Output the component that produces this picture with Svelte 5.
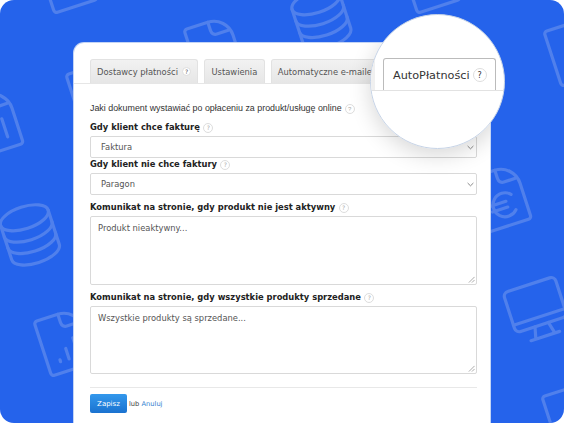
<script>
  const tabs = [
    { label: "Dostawcy płatności", help: true },
    { label: "Ustawienia" },
    { label: "Automatyczne e-maile" }
  ];
</script>

{#snippet help(cls = "")}
  <span class="help {cls}">?</span>
{/snippet}

{#snippet doc(x, y, body)}
  <g transform="translate({x} {y}) rotate(-18)">
    <path d="M3 0h22a20 20 0 0 1 20 20v34a3 3 0 0 1-3 3H3a3 3 0 0 1-3-3V3a3 3 0 0 1 3-3z" />
    <path d="M25 0v9a5 5 0 0 0 5 5h12" />
    {@render body?.()}
  </g>
{/snippet}

{#snippet coins(x, y)}
  <g transform="translate({x} {y}) rotate(-18)">
    <ellipse cx="25" cy="10" rx="25" ry="11" />
    <path d="M0 10v12c0 6 11 11 25 11s25-5 25-11V10" />
    <path d="M0 22v12c0 6 11 11 25 11s25-5 25-11V22" />
    <path d="M0 34v12c0 6 11 11 25 11s25-5 25-11V34" />
  </g>
{/snippet}

{#snippet bars()}
  <path d="M13 44v2M22 35v11M32 27v19" />
{/snippet}

{#snippet euro()}
  <path d="M33 28a12 12 0 1 0 0 16M10 33h16M10 39h16" />
{/snippet}

<main class="stage">
  <svg class="pattern" viewBox="0 0 564 423" aria-hidden="true">
    {@render doc(37, -41)}
    {@render doc(184, 30)}
    {@render coins(289, 0)}
    {@render doc(400, -41)}
    {@render doc(544, 32)}
    {@render doc(-37, 103, bars)}
    {@render doc(66, 75)}
    {@render coins(-2.5, 216)}
    {@render doc(34, 322, bars)}
    {@render doc(471, 178, euro)}
    <g transform="translate(503 293) rotate(-18)">
      <rect width="54" height="42" rx="5" />
      <path d="M0 34h54M20 42l-3 12M34 42l3 12M12 54h30" />
    </g>
    {@render doc(542, 397)}
  </svg>

  <section class="card">
    <nav class="tabs">
      {#each tabs as tab}
        <div class="tab">{tab.label}{#if tab.help}{@render help("help-tab")}{/if}</div>
      {/each}
    </nav>

    <form class="form">
      <p class="intro">Jaki dokument wystawiać po opłaceniu za produkt/usługę online {@render help()}</p>

      <div class="label first">Gdy klient chce fakturę {@render help()}</div>
      <div class="select">Faktura
        <svg class="chevron" viewBox="0 0 8 5"><path d="M.7.8 4 4 7.300.8" /></svg>
      </div>

      <div class="label tight">Gdy klient nie chce faktury {@render help()}</div>
      <div class="select">Paragon
        <svg class="chevron" viewBox="0 0 8 5"><path d="M.7.8 4 4 7.300.8" /></svg>
      </div>

      <div class="label">Komunikat na stronie, gdy produkt nie jest aktywny {@render help()}</div>
      <div class="textarea">Produkt nieaktywny...
        <svg class="grip" viewBox="0 0 8 8"><path d="M1 7.500 7.500 1M4.500 7.500l3-3" /></svg>
      </div>

      <div class="label">Komunikat na stronie, gdy wszystkie produkty sprzedane {@render help()}</div>
      <div class="textarea second">Wszystkie produkty są sprzedane...
        <svg class="grip" viewBox="0 0 8 8"><path d="M1 7.500 7.500 1M4.500 7.500l3-3" /></svg>
      </div>

      <div class="actions">
        <button type="button" class="save">Zapisz</button>
        <span class="or">lub <a href="#anuluj">Anuluj</a></span>
      </div>
    </form>
    <div class="lens-shadow"></div>
  </section>

  <div class="lens">
    <div class="lens-tab">AutoPłatności <span class="help help-lens">?</span></div>
  </div>
</main>

<style>
  :global(body) {
    margin: 0;
    background: #fff;
  }

  .stage {
    position: relative;
    width: 564px;
    height: 423px;
    overflow: hidden;
    background: #2563eb;
    border-radius: 14px;
    font-family: "DejaVu Sans", sans-serif;
    padding: 43px 0 0 74px;
    box-sizing: border-box;
  }

  .pattern {
    position: absolute;
    inset: 0;
    width: 564px;
    height: 423px;
    fill: none;
    stroke: #5080ec;
    stroke-width: 3.2;
    stroke-linecap: round;
    stroke-linejoin: round;
  }

  .card {
    position: relative;
    width: 416px;
    height: 400px;
    overflow: hidden;
    background: #fff;
    border-radius: 10px 10px 0 0;
    box-shadow: 0 0 0 1px #c3d4f5;
    box-sizing: border-box;
    padding-top: 16px;
  }

  .tabs {
    display: flex;
    gap: 6px;
    height: 24px;
    padding-left: 16px;
    border-bottom: 1px solid #e6e6e6;
    overflow: hidden;
  }

  .tab {
    display: flex;
    align-items: center;
    gap: 4px;
    flex: none;
    height: 24px;
    padding: 0 6.5px 0 6px;
    font-size: 8.35px;
    color: #555;
    white-space: nowrap;
    background: linear-gradient(#f2f2f2, #e6e6e6);
    border: 1px solid #e2e2e2;
    border-bottom: 0;
    border-radius: 3px 3px 0 0;
    box-sizing: border-box;
  }

  .help {
    display: inline-flex;
    align-items: center;
    justify-content: center;
    width: 10px;
    height: 10px;
    margin-left: 0.5px;
    font-size: 6px;
    font-weight: 400;
    color: #aaa;
    background: #fff;
    border: 1px solid #ddd;
    border-radius: 50%;
    box-sizing: border-box;
    vertical-align: middle;
  }

  .help-tab {
    width: 9px;
    height: 9px;
    margin-left: 0;
    color: #555;
  }

  .form {
    padding: 0 13px 0 16px;
  }

  .intro {
    margin: 18px 0 0;
    height: 12px;
    font: 8.9px/12px "Liberation Sans", sans-serif;
    color: #333;
  }

  .label {
    height: 12px;
    margin-top: 6px;
    font-size: 8.35px;
    line-height: 12px;
    font-weight: 700;
    color: #222;
  }

  .label.first {
    margin-top: 7px;
  }

  .label.tight {
    margin-top: 0;
  }

  .select,
  .textarea {
    position: relative;
    margin-top: 3px;
    font-size: 8.35px;
    color: #555;
    background: #fff;
    border: 1px solid #d9d9d9;
    border-radius: 2px;
    box-sizing: border-box;
  }

  .select {
    height: 22px;
    padding-left: 10px;
    line-height: 20px;
  }

  .textarea {
    height: 69px;
    padding: 5px 7px;
    line-height: 12px;
  }

  .textarea.second {
    height: 68px;
  }

  .chevron {
    position: absolute;
    right: 2px;
    top: 8px;
    width: 7px;
    height: 5px;
    fill: none;
    stroke: #777;
    stroke-width: 1;
  }

  .grip {
    position: absolute;
    right: 1px;
    bottom: 1px;
    width: 7px;
    height: 7px;
    fill: none;
    stroke: #888;
    stroke-width: 0.8;
  }

  .actions {
    display: flex;
    align-items: center;
    gap: 2px;
    margin-top: 13px;
    padding-top: 6px;
    border-top: 1px solid #e8e8e8;
  }

  .save {
    width: 37px;
    height: 19px;
    padding: 0;
    font: 7px "DejaVu Sans", sans-serif;
    color: #fff;
    background: linear-gradient(#3398ec, #1a72d0);
    border: 0;
    border-radius: 2px;
  }

  .or {
    font: 6.7px "DejaVu Sans", sans-serif;
    color: #444;
  }

  .or a {
    color: #2f7fd0;
    text-decoration: none;
  }

  /* shadow stays inside the card, the blue around it is not darkened */
  .lens-shadow {
    position: absolute;
    left: 296px;
    top: -29px;
    width: 135px;
    height: 135px;
    border-radius: 50%;
    box-shadow: 0 6px 22px rgba(0, 0, 0, 0.16);
  }

  .lens {
    position: absolute;
    left: 370px;
    top: 14px;
    width: 135px;
    height: 135px;
    padding: 43px 0 0 12px;
    overflow: hidden;
    background: #fff;
    border: 1px solid #c6d3e6;
    border-radius: 50%;
    box-sizing: border-box;
  }

  .lens::before {
    content: "";
    position: absolute;
    left: 0;
    right: 0;
    top: 75px;
    border-top: 1px solid #e2e2e2;
  }

  .lens::after {
    content: "";
    position: absolute;
    left: 0;
    top: 44px;
    width: 4px;
    height: 31px;
    background: #f0f0f0;
  }

  .lens-tab {
    display: flex;
    align-items: center;
    gap: 1px;
    width: 113px;
    height: 33px;
    padding-left: 9px;
    font-size: 11.25px;
    color: #333;
    background: #fff;
    border: 1px solid #bbb;
    border-bottom: 0;
    border-radius: 3px 3px 0 0;
    box-sizing: border-box;
  }

  .help-lens {
    width: 14px;
    height: 14px;
    margin-left: 2px;
    font-size: 8px;
    color: #333;
  }
</style>
